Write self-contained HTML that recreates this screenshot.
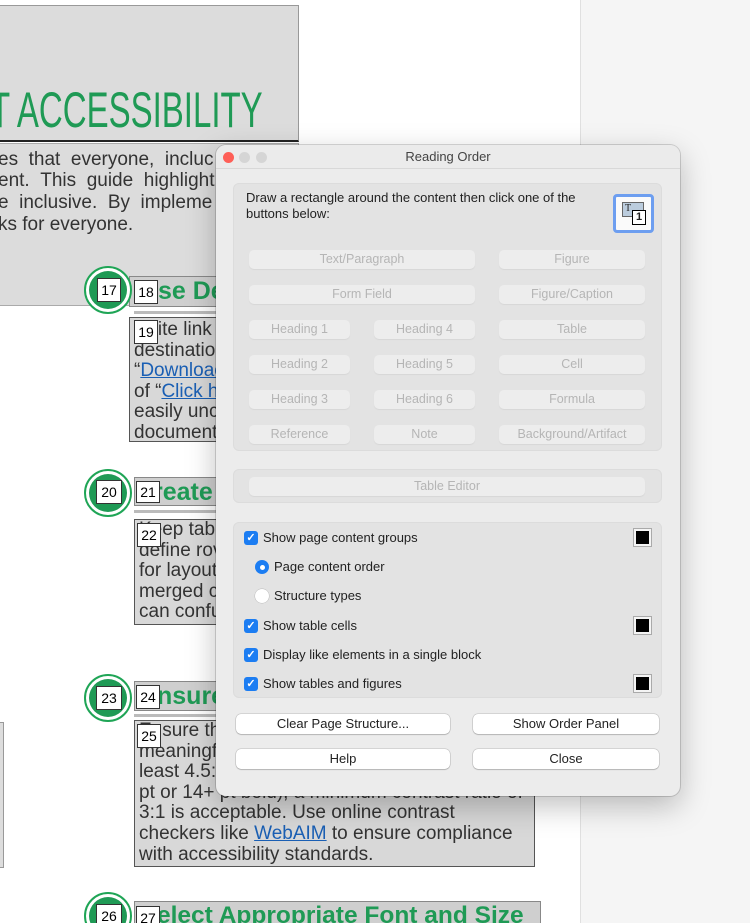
<!DOCTYPE html>
<html><head><meta charset="utf-8"><style>
*{margin:0;padding:0;box-sizing:border-box}
html,body{width:750px;height:923px;overflow:hidden}
body{background:#fff;font-family:"Liberation Sans",sans-serif;position:relative}
.a{position:absolute}
.gray{background:#dcdcdc;border:1px solid #8a8a8a}
.ptxt{font-size:19px;color:#333;line-height:21px;white-space:nowrap}
.circ{position:absolute;width:48px;height:48px;border-radius:50%;border:2px solid #1fa556;background:#fff}
.circ:after{content:"";position:absolute;left:3px;top:3px;width:38px;height:38px;border-radius:50%;background:#1f9a55}
.num{position:absolute;background:#fff;border:1px solid #333;font-size:14px;color:#000;text-align:center;line-height:22px;width:24px;height:24px;z-index:2}
.hd{position:absolute;background:#cfcfcf;border:1px solid #888;color:#1f9a55;font-weight:bold;font-size:25px;line-height:28px;white-space:nowrap;overflow:hidden}
.body{position:absolute;background:#d8d8d8;border:1px solid #555;font-size:19px;line-height:20.6px;color:#333;padding-left:4px;white-space:nowrap;overflow:hidden}
.lk{color:#1a5fb4;text-decoration:underline}
.dlg{position:absolute;left:216px;top:145px;width:464px;height:651px;background:#ececec;border-radius:10px;box-shadow:0 0 0 1px rgba(0,0,0,.15),0 10px 30px rgba(0,0,0,.25);font-size:13px;color:#222}
.grp{position:absolute;background:#e3e3e3;border-radius:6px;border:1px solid #dcdcdc}
.db{position:absolute;height:19px;background:#ededed;border-radius:5px;color:#b5b5b5;text-align:center;line-height:19px;font-size:12.5px;box-shadow:0 1px 1px rgba(0,0,0,.06)}
.wb{position:absolute;height:20px;background:#fff;border-radius:5px;color:#222;text-align:center;line-height:20px;font-size:13px;box-shadow:0 0 0 .5px rgba(0,0,0,.2),0 1px 1px rgba(0,0,0,.15)}
.cb{position:absolute;width:14px;height:14px;border-radius:3px;background:#1c7df2;color:#fff;font-size:11px;line-height:14px;text-align:center;font-weight:bold}
.lbl{position:absolute;font-size:13px;color:#222;white-space:nowrap}
.sw{position:absolute;width:17px;height:17px;background:#000;border:2px solid #f4f4f4;outline:1px solid #aaa}
</style></head><body>
<div class="a" style="left:580px;top:0;width:170px;height:923px;background:#f5f5f5;border-left:1px solid #e0e0e0"></div>
<div class="a gray" style="left:-2px;top:5px;width:301px;height:137px;border-color:#999;border-bottom:2px solid #222"></div>
<div class="a" style="left:-10px;top:82px;font-size:50px;color:#1f9a55;line-height:56px;transform:scaleX(.66);transform-origin:0 0;white-space:nowrap">T ACCESSIBILITY</div>
<div class="a gray" style="left:-2px;top:143px;width:301px;height:163px;border-color:#aaa"></div>
<div class="a ptxt" style="left:-2px;top:149px">es &nbsp;that &nbsp;everyone, &nbsp;incluc</div>
<div class="a ptxt" style="left:-2px;top:170px">ent. &nbsp;This &nbsp;guide &nbsp;highlight</div>
<div class="a ptxt" style="left:-2px;top:192px">e &nbsp;inclusive. &nbsp;By &nbsp;impleme</div>
<div class="a ptxt" style="left:-2px;top:214px">ks for everyone.</div>

<div class="hd" style="left:129px;top:276px;width:100px;height:31px;padding-left:28px">se De</div>
<div class="a" style="left:134px;top:311px;width:90px;height:3px;background:#bbb"></div>
<div class="circ" style="left:84px;top:266px"></div>
<div class="num" style="left:97px;top:278px">17</div>
<div class="num" style="left:134px;top:280px;width:24px">18</div>
<div class="body" style="left:129px;top:317px;width:100px;height:125px;padding-top:2px">Write link<br>destinatio<br>“<span class="lk">Downloac</span><br>of “<span class="lk">Click h</span><br>easily unc<br>document</div>
<div class="num" style="left:134px;top:320px">19</div>

<div class="hd" style="left:134px;top:477px;width:90px;height:29px;padding-left:18px">reate</div>
<div class="a" style="left:134px;top:510px;width:90px;height:3px;background:#bbb"></div>
<div class="circ" style="left:84px;top:469px"></div>
<div class="num" style="left:96px;top:480px;width:26px">20</div>
<div class="num" style="left:136px;top:481px;width:24px;height:22px;line-height:20px">21</div>
<div class="body" style="left:134px;top:519px;width:90px;height:106px">Keep tabl<br>define rov<br>for layout<br>merged c<br>can confu</div>
<div class="num" style="left:137px;top:523px">22</div>

<div class="a" style="left:-2px;top:722px;width:6px;height:146px;background:#ddd;border:1px solid #999"></div>
<div class="hd" style="left:134px;top:681px;width:90px;height:30px;padding-left:22px">nsure</div>
<div class="a" style="left:134px;top:714px;width:90px;height:3px;background:#bbb"></div>
<div class="circ" style="left:84px;top:674px"></div>
<div class="num" style="left:96px;top:686px;width:26px">23</div>
<div class="num" style="left:136px;top:685px">24</div>
<div class="body" style="left:134px;top:720px;width:401px;height:147px">Ensure th<br>meaningf<br>least 4.5:<br>pt or 14+ pt bold), a minimum contrast ratio of<br>3:1 is acceptable. Use online contrast<br>checkers like <span class="lk">WebAIM</span> to ensure compliance<br>with accessibility standards.</div>
<div class="num" style="left:137px;top:724px">25</div>

<div class="hd" style="left:134px;top:901px;width:407px;height:30px;padding-left:22px;font-size:24.5px">elect Appropriate Font and Size</div>
<div class="circ" style="left:84px;top:892px"></div>
<div class="num" style="left:96px;top:904px;width:26px">26</div>
<div class="num" style="left:136px;top:906px">27</div>

<div class="dlg">
 <div class="a" style="left:0;top:0;width:464px;height:24px;border-bottom:1px solid #d8d8d8;border-radius:10px 10px 0 0;background:#ebebeb"></div>
 <div class="a" style="left:7px;top:7px;width:11px;height:11px;border-radius:50%;background:#fe5f57"></div>
 <div class="a" style="left:23px;top:7px;width:11px;height:11px;border-radius:50%;background:#d5d5d5"></div>
 <div class="a" style="left:40px;top:7px;width:11px;height:11px;border-radius:50%;background:#d5d5d5"></div>
 <div class="a" style="left:0;top:4px;width:464px;text-align:center;font-size:13px;color:#444">Reading Order</div>

 <div class="grp" style="left:17px;top:38px;width:429px;height:268px"></div>
 <div class="lbl" style="left:30px;top:45px;line-height:16px">Draw a rectangle around the content then click one of the<br>buttons below:</div>
 <div class="a" style="left:397px;top:49px;width:41px;height:39px;border:3px solid #6d9ef0;border-radius:4px;background:#fafafa">
  <div class="a" style="left:6px;top:5px;width:22px;height:15px;border:1px solid #666;background:#bcd;font-size:10px;line-height:12px;padding-left:2px;font-family:'Liberation Serif',serif">T</div>
  <div class="a" style="left:16px;top:13px;width:14px;height:15px;border:1.5px solid #000;background:#fff;font-size:11px;font-weight:bold;line-height:12px;text-align:center">1</div>
 </div>
 <div class="db" style="left:33px;top:105px;width:226px">Text/Paragraph</div>
 <div class="db" style="left:283px;top:105px;width:146px">Figure</div>
 <div class="db" style="left:33px;top:140px;width:226px">Form Field</div>
 <div class="db" style="left:283px;top:140px;width:146px">Figure/Caption</div>
 <div class="db" style="left:33px;top:175px;width:101px">Heading 1</div>
 <div class="db" style="left:158px;top:175px;width:101px">Heading 4</div>
 <div class="db" style="left:283px;top:175px;width:146px">Table</div>
 <div class="db" style="left:33px;top:210px;width:101px">Heading 2</div>
 <div class="db" style="left:158px;top:210px;width:101px">Heading 5</div>
 <div class="db" style="left:283px;top:210px;width:146px">Cell</div>
 <div class="db" style="left:33px;top:245px;width:101px">Heading 3</div>
 <div class="db" style="left:158px;top:245px;width:101px">Heading 6</div>
 <div class="db" style="left:283px;top:245px;width:146px">Formula</div>
 <div class="db" style="left:33px;top:280px;width:101px">Reference</div>
 <div class="db" style="left:158px;top:280px;width:101px">Note</div>
 <div class="db" style="left:283px;top:280px;width:146px">Background/Artifact</div>

 <div class="grp" style="left:17px;top:324px;width:429px;height:34px"></div>
 <div class="db" style="left:33px;top:332px;width:396px">Table Editor</div>

 <div class="grp" style="left:17px;top:377px;width:429px;height:176px"></div>
 <div class="cb" style="left:28px;top:386px">✓</div><div class="lbl" style="left:47px;top:385px">Show page content groups</div>
 <div class="sw" style="left:418px;top:384px"></div>
 <div class="a" style="left:39px;top:415px;width:14px;height:14px;border-radius:50%;background:#1c7df2"><div class="a" style="left:4.5px;top:4.5px;width:5px;height:5px;border-radius:50%;background:#fff"></div></div>
 <div class="lbl" style="left:58px;top:414px">Page content order</div>
 <div class="a" style="left:39px;top:444px;width:14px;height:14px;border-radius:50%;background:#fff;box-shadow:0 0 0 .5px #bbb"></div>
 <div class="lbl" style="left:58px;top:443px">Structure types</div>
 <div class="cb" style="left:28px;top:474px">✓</div><div class="lbl" style="left:47px;top:473px">Show table cells</div>
 <div class="sw" style="left:418px;top:472px"></div>
 <div class="cb" style="left:28px;top:503px">✓</div><div class="lbl" style="left:47px;top:502px">Display like elements in a single block</div>
 <div class="cb" style="left:28px;top:532px">✓</div><div class="lbl" style="left:47px;top:531px">Show tables and figures</div>
 <div class="sw" style="left:418px;top:530px"></div>

 <div class="wb" style="left:20px;top:569px;width:214px">Clear Page Structure...</div>
 <div class="wb" style="left:257px;top:569px;width:186px">Show Order Panel</div>
 <div class="wb" style="left:20px;top:604px;width:214px">Help</div>
 <div class="wb" style="left:257px;top:604px;width:186px">Close</div>
</div>
</body></html>
